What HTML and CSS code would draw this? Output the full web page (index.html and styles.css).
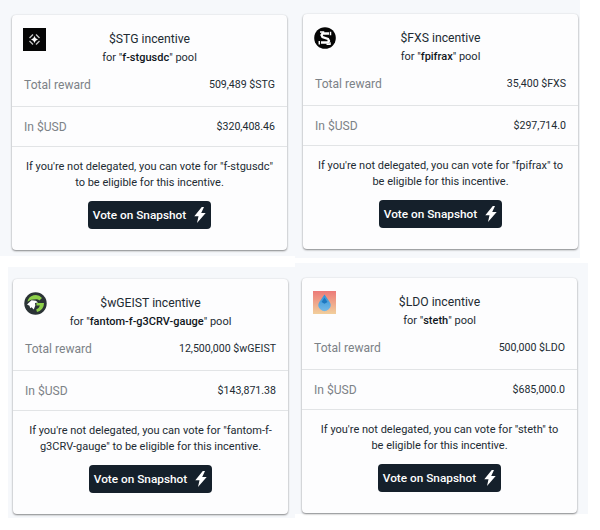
FILE: index.html
```html
<!DOCTYPE html>
<html lang="en">
<head>
    <meta charset="UTF-8">
    <meta name="viewport" content="width=device-width, initial-scale=1.0">
    <title>Incentives</title>
    <link rel="stylesheet" href="styles.css">
</head>
<body>
    <main class="board">
        <section class="panel panel-stg">
            <div class="card">
                <div class="card-head">
                    <svg class="token" viewBox="0 0 23 23">
                        <rect width="23" height="23" fill="#050505"/>
                        <path d="M11.5 8l1.2 2.3 2.3 1.2-2.3 1.2-1.2 2.3-1.2-2.3L8 11.500l2.300-1.200z" fill="#fff"/>
                        <path d="M10 6.500L6.500 10M13 6.500l3.500 3.500M10 16.500L6.500 13M13 16.500l3.500-3.500" stroke="#c4c4c4" stroke-width="1.400" fill="none"/>
                    </svg>
                    <h2 class="title">$STG incentive</h2>
                    <p class="pool">for "<b>f-stgusdc</b>" pool</p>
                </div>
                <div class="row">
                    <span class="label">Total reward</span>
                    <span class="value">509,489 $STG</span>
                </div>
                <div class="row">
                    <span class="label">In $USD</span>
                    <span class="value">$320,408.46</span>
                </div>
                <div class="vote">
                    <p class="note">If you're not delegated, you can vote for "f-stgusdc" to be eligible for this incentive.</p>
                    <a class="vote-btn">Vote on Snapshot
                        <svg class="bolt" viewBox="0 0 12 16"><path d="M7.800 0L.3 9.200h4.200L3 16l8.700-10H7.200L10 0z" fill="#fff"/></svg>
                    </a>
                </div>
            </div>
        </section>

        <section class="panel panel-fxs">
            <div class="card">
                <div class="card-head">
                    <svg class="token" viewBox="0 0 23 23">
                        <circle cx="11" cy="11" r="10.800" fill="#050505"/>
                        <path d="M15 6.500H8.500L7.500 8l1 2 5.500 2 1 2-1 1.500H7" fill="none" stroke="#fff" stroke-width="2.300"/>
                        <path d="M6 5h3.500v2M16.500 4.800v3.400M5.300 14v3.400M12.500 17.300H16v-2" fill="none" stroke="#fff" stroke-width="1.500"/>
                    </svg>
                    <h2 class="title">$FXS incentive</h2>
                    <p class="pool">for "<b>fpifrax</b>" pool</p>
                </div>
                <div class="row">
                    <span class="label">Total reward</span>
                    <span class="value">35,400 $FXS</span>
                </div>
                <div class="row">
                    <span class="label">In $USD</span>
                    <span class="value">$297,714.0</span>
                </div>
                <div class="vote">
                    <p class="note">If you're not delegated, you can vote for "fpifrax" to be eligible for this incentive.</p>
                    <a class="vote-btn">Vote on Snapshot
                        <svg class="bolt" viewBox="0 0 12 16"><path d="M7.800 0L.3 9.200h4.200L3 16l8.700-10H7.200L10 0z" fill="#fff"/></svg>
                    </a>
                </div>
            </div>
        </section>

        <section class="panel panel-geist">
            <div class="card">
                <div class="card-head">
                    <svg class="token" viewBox="0 0 23 23">
                        <circle cx="11.500" cy="11.500" r="11.200" fill="#2b3336"/>
                        <path d="M3.400 9.800A8.400 8.400 0 0 1 18 6l-2.600 2.400a5.400 5.400 0 0 0-3-1.200L7 7.800z" fill="#8ed14b"/>
                        <path d="M12.500 11h7.500a8.600 8.600 0 0 1-7 8.900l-.8-2.500a6 6 0 0 0 3.800-3.900h-3.500z" fill="#8ed14b"/>
                        <path d="M3 12.500l4.500-4.200 4.300.4 2.200 1.800-3 .6.300 2.400-1.500 4-2.300-2.200-1.300 1-.7-2.600z" fill="#fff"/>
                    </svg>
                    <h2 class="title">$wGEIST incentive</h2>
                    <p class="pool">for "<b>fantom-f-g3CRV-gauge</b>" pool</p>
                </div>
                <div class="row">
                    <span class="label">Total reward</span>
                    <span class="value">12,500,000 $wGEIST</span>
                </div>
                <div class="row">
                    <span class="label">In $USD</span>
                    <span class="value">$143,871.38</span>
                </div>
                <div class="vote">
                    <p class="note">If you're not delegated, you can vote for "fantom-f-g3CRV-gauge" to be eligible for this incentive.</p>
                    <a class="vote-btn">Vote on Snapshot
                        <svg class="bolt" viewBox="0 0 12 16"><path d="M7.800 0L.3 9.200h4.200L3 16l8.700-10H7.200L10 0z" fill="#fff"/></svg>
                    </a>
                </div>
            </div>
        </section>

        <section class="panel panel-ldo">
            <div class="card">
                <div class="card-head">
                    <svg class="token" viewBox="0 0 23 23">
                        <defs>
                            <linearGradient id="ldoBg" x1="0" y1="0" x2="0" y2="1">
                                <stop offset="0" stop-color="#ec7a78"/>
                                <stop offset="1" stop-color="#f2cf9c"/>
                            </linearGradient>
                            <linearGradient id="ldoDrop" x1="0" y1="0" x2="0" y2="1">
                                <stop offset="0" stop-color="#2f93d8"/>
                                <stop offset="1" stop-color="#74b8e6"/>
                            </linearGradient>
                        </defs>
                        <rect width="23" height="23" fill="url(#ldoBg)"/>
                        <path d="M11.500 3.500l5 7.200a6 6 0 1 1-10 0z" fill="url(#ldoDrop)"/>
                        <path d="M11.500 6.500l3 4.600-3 1.600-3-1.600z" fill="#1e78c0"/>
                    </svg>
                    <h2 class="title">$LDO incentive</h2>
                    <p class="pool">for "<b>steth</b>" pool</p>
                </div>
                <div class="row">
                    <span class="label">Total reward</span>
                    <span class="value">500,000 $LDO</span>
                </div>
                <div class="row">
                    <span class="label">In $USD</span>
                    <span class="value">$685,000.0</span>
                </div>
                <div class="vote">
                    <p class="note">If you're not delegated, you can vote for "steth" to be eligible for this incentive.</p>
                    <a class="vote-btn">Vote on Snapshot
                        <svg class="bolt" viewBox="0 0 12 16"><path d="M7.800 0L.3 9.200h4.200L3 16l8.700-10H7.200L10 0z" fill="#fff"/></svg>
                    </a>
                </div>
            </div>
        </section>
    </main>
</body>
</html>
```

FILE: styles.css
```css
body {
    font-family: Roboto, "Liberation Sans", sans-serif;
    margin: 0;
    padding: 0;
    background-color: #fff;
    color: #222b33;
}
.board {
    display: grid;
    grid-template-columns: 295px 305px;
    align-items: start;
}
.panel {
    background-color: #f6f8fb;
    box-sizing: border-box;
}
.panel-stg {
    height: 256px;
    padding: 15px 8px 0 12px;
}
.panel-fxs {
    width: 285px;
    height: 258px;
    padding: 14px 0 0 8px;
}
.panel-geist {
    height: 251px;
    margin: 9px 0 0 8px;
    padding: 12px 0 0 5px;
}
.panel-ldo {
    width: 293px;
    height: 251px;
    margin-top: 5px;
    padding: 15px 0 0 7px;
}
.card {
    width: 275px;
    height: 235px;
    background-color: #fdfdfe;
    border-radius: 4px;
    box-shadow: 0 1px 2px rgba(0, 0, 0, 0.45), 0 0 2px rgba(0, 0, 0, 0.08);
}
.card-head {
    position: relative;
    padding-top: 15px;
    text-align: center;
    height: 37px;
}
.token {
    position: absolute;
    left: 11px;
    top: 13px;
    width: 23px;
    height: 23px;
}
.title {
    margin: 0;
    font-size: 12.2px;
    font-weight: 400;
    line-height: 18px;
}
.pool {
    margin: 1px 0 0;
    font-size: 11px;
    line-height: 18px;
}
.pool b {
    font-weight: 500;
    color: #10161c;
}
.row {
    display: flex;
    justify-content: space-between;
    align-items: center;
    box-sizing: border-box;
    height: 40px;
    padding: 0 12px;
    border-bottom: 1px solid #e2e4e6;
}
.row:nth-of-type(2) {
    padding-bottom: 4px;
}
.label {
    font-size: 12.1px;
    color: #7c8287;
}
.value {
    font-size: 10.6px;
}
.vote {
    padding: 12px 12px 0;
    text-align: center;
}
.note {
    margin: 0;
    font-size: 11px;
    line-height: 16px;
}
.vote-btn {
    display: inline-flex;
    align-items: center;
    justify-content: center;
    gap: 8px;
    width: 123px;
    height: 28px;
    margin-top: 10px;
    background-color: #15202b;
    color: #fff;
    border-radius: 4px;
    font-size: 11.8px;
    font-weight: 500;
}
.bolt {
    width: 12px;
    height: 16px;
}
```
